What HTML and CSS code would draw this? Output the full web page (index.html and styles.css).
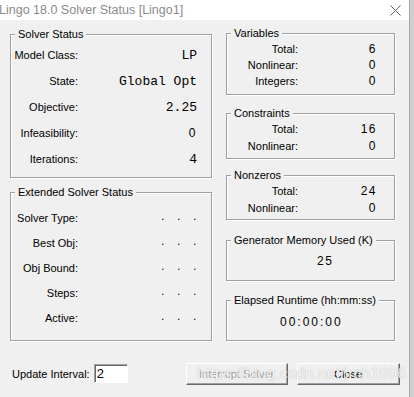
FILE: index.html
```html
<!DOCTYPE html>
<html>
<head>
  <title>Lingo 18.0 Solver Status</title>
  <link rel="stylesheet" href="styles.css">
</head>
<body>
  <div class="window">
    <div class="titlebar">
      <span class="title">Lingo 18.0 Solver Status [Lingo1]</span>
      <svg class="close" width="11" height="11" viewBox="0 0 11 11">
        <path d="M0.5 0.5 L10.5 10.5 M10.5 0.5 L0.5 10.5" stroke="#5f5f5f" stroke-width="1" fill="none"/>
      </svg>
    </div>

    <div class="content">
      <div class="columns">
        <div class="col-left">
          <div class="group solver">
            <span class="group-title">Solver Status</span>
            <div class="row"><span class="label">Model Class:</span><span class="value">LP</span></div>
            <div class="row"><span class="label">State:</span><span class="value">Global Opt</span></div>
            <div class="row"><span class="label">Objective:</span><span class="value">2.25</span></div>
            <div class="row"><span class="label">Infeasibility:</span><span class="value num">0</span></div>
            <div class="row"><span class="label">Iterations:</span><span class="value">4</span></div>
          </div>

          <div class="group extended">
            <span class="group-title">Extended Solver Status</span>
            <div class="row"><span class="label">Solver Type:</span><span class="value dots">. . .</span></div>
            <div class="row"><span class="label">Best Obj:</span><span class="value dots">. . .</span></div>
            <div class="row"><span class="label">Obj Bound:</span><span class="value dots">. . .</span></div>
            <div class="row"><span class="label">Steps:</span><span class="value dots">. . .</span></div>
            <div class="row"><span class="label">Active:</span><span class="value dots">. . .</span></div>
          </div>
        </div>

        <div class="col-right">
          <div class="group small variables">
            <span class="group-title">Variables</span>
            <div class="row"><span class="label">Total:</span><span class="value num">6</span></div>
            <div class="row"><span class="label">Nonlinear:</span><span class="value num">0</span></div>
            <div class="row"><span class="label">Integers:</span><span class="value num">0</span></div>
          </div>

          <div class="group small constraints">
            <span class="group-title">Constraints</span>
            <div class="row"><span class="label">Total:</span><span class="value num">16</span></div>
            <div class="row"><span class="label">Nonlinear:</span><span class="value num">0</span></div>
          </div>

          <div class="group small nonzeros">
            <span class="group-title">Nonzeros</span>
            <div class="row"><span class="label">Total:</span><span class="value num">24</span></div>
            <div class="row"><span class="label">Nonlinear:</span><span class="value num">0</span></div>
          </div>

          <div class="group memory">
            <span class="group-title">Generator Memory Used (K)</span>
            <div class="single num">25</div>
          </div>

          <div class="group runtime">
            <span class="group-title">Elapsed Runtime (hh:mm:ss)</span>
            <div class="single num wide">00:00:00</div>
          </div>
        </div>
      </div>

      <div class="bottom">
        <label class="interval-label">Update Interval:</label>
        <input class="interval" type="text" value="2">
        <button class="btn interrupt" disabled>Interrupt Solver</button>
        <button class="btn close-btn">Close</button>
      </div>
    </div>

    <div class="watermark">https://blog.csdn.net/jmh1996</div>
  </div>
</body>
</html>
```

FILE: styles.css
```css
body {
  margin: 0;
  background: #cfcfcf;
  font-family: "Liberation Sans", Arial, sans-serif;
  font-size: 11px;
  color: #000;
}
.window {
  position: relative;
  width: 410px;
  height: 397px;
  box-sizing: border-box;
  background: #f0f0f0;
  border-right: 1px solid #a6a6a6;
  overflow: hidden;
}
.titlebar {
  height: 20px;
  background: #fff;
  display: flex;
  align-items: center;
  justify-content: space-between;
}
.title {
  margin-left: -1px;
  font-size: 12.5px;
  color: #8a8a8a;
}
.close {
  margin-right: 8px;
}
.content {
  padding: 13px 0 0 10px;
}
.columns {
  display: flex;
  gap: 14px;
}
.col-left {
  width: 202px;
  margin-top: 1px;
}
.col-right {
  width: 169px;
}
.group {
  position: relative;
  box-sizing: border-box;
  border: 1px solid #a0a0a0;
  box-shadow: inset 1px 1px 0 #fff, 1px 1px 0 #fff;
}
.group-title {
  position: absolute;
  top: -7px;
  left: 4px;
  padding: 0 3px;
  line-height: 13px;
  background: #f0f0f0;
}
.row {
  display: grid;
  grid-template-columns: 67px 119px;
  align-items: center;
}
.label {
  text-align: right;
}
.value {
  text-align: right;
  font-family: "Liberation Mono", "Courier New", monospace;
  font-size: 13px;
}
.num {
  font-family: "Liberation Sans", Arial, sans-serif;
  font-size: 12px;
  letter-spacing: 1.5px;
}
.wide {
  letter-spacing: 2px;
}
.dots {
  font-size: 9px;
  letter-spacing: 2.6px;
  margin-right: -3px;
}
.solver {
  height: 144px;
  padding-top: 7px;
}
.solver .row {
  height: 26px;
}
.extended {
  height: 149px;
  margin-top: 14px;
  padding-top: 12px;
}
.extended .row {
  height: 25px;
}
.small .row {
  grid-template-columns: 71px 79px;
  height: 16px;
}
.variables {
  height: 62px;
  padding-top: 7px;
}
.constraints {
  height: 46px;
  margin-top: 18px;
  padding-top: 6px;
}
.nonzeros {
  height: 45px;
  margin-top: 16px;
  padding-top: 6px;
}
.constraints .row,
.nonzeros .row {
  height: 17px;
}
.memory {
  height: 41px;
  margin-top: 20px;
  padding: 12px 0 0 90px;
}
.runtime {
  height: 41px;
  margin-top: 19px;
  padding: 13px 0 0 53px;
}
.single {
  line-height: 16px;
}
.bottom {
  display: flex;
  align-items: center;
  height: 23px;
  margin-top: 21px;
  padding-left: 2px;
}
.interval {
  box-sizing: border-box;
  width: 34px;
  height: 19px;
  margin: 0 0 0 4px;
  padding: 0 2px;
  border: 1px solid;
  border-color: #a0a0a0 #fff #fff #a0a0a0;
  box-shadow: inset 1px 1px 0 #696969;
  background: #fff;
  font-family: "Liberation Sans", Arial, sans-serif;
  font-size: 13px;
  outline: none;
}
.btn {
  box-sizing: border-box;
  height: 22px;
  padding: 0;
  background: #f0f0f0;
  border: 1px solid;
  border-color: #fff #696969 #696969 #fff;
  box-shadow: inset -1px -1px 0 #a0a0a0;
  font-family: "Liberation Sans", Arial, sans-serif;
  font-size: 11px;
  color: #000;
}
.interrupt {
  width: 102px;
  margin-left: 58px;
  color: #a0a0a0;
  text-shadow: 1px 1px 0 #fff;
}
.close-btn {
  width: 103px;
  margin-left: 9px;
}
.watermark {
  position: absolute;
  left: 197px;
  top: 365px;
  font-family: "Liberation Sans", Arial, sans-serif;
  font-size: 16px;
  line-height: 18px;
  color: rgba(255, 255, 255, 0.85);
  text-shadow: 0 0 1px rgba(0, 0, 0, 0.3);
  white-space: nowrap;
}
```
